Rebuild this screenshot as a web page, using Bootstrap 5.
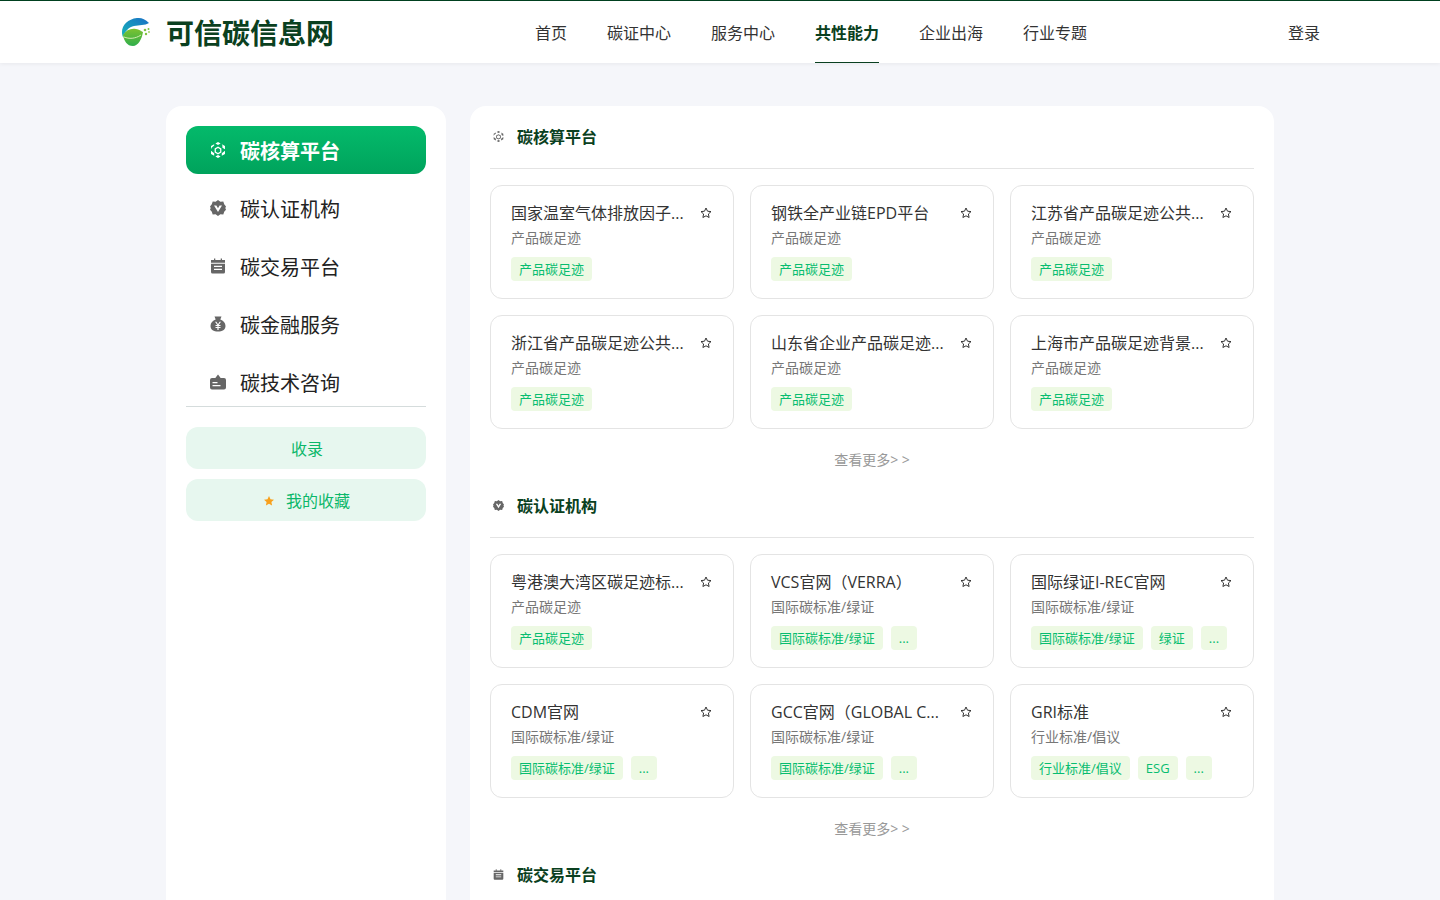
<!DOCTYPE html>
<html lang="zh-CN">
<head>
    <meta charset="UTF-8">
    <meta name="viewport" content="width=device-width, initial-scale=1">
    <title>可信碳信息网</title>
    <link href="https://cdn.jsdelivr.net/npm/bootstrap@5.3.0/dist/css/bootstrap.min.css" rel="stylesheet">
    <style>
        body {
            background-color: #f5f6fa;
            font-family: "Open Sans", "Noto Sans CJK SC", sans-serif;
            color: #222;
            overflow: hidden;
            height: 900px;
        }
        .top-bar {
            height: 63px;
            background: #fff;
            border-top: 1px solid #00401f;
            box-shadow: 0 1px 4px rgba(0, 0, 0, .06);
        }
        .brand-box { margin-left: 120px; width: 400px; }
        .brand-name { font-size: 28px; font-weight: 700; color: #0a4020; margin-left: 14px; line-height: 1; padding-top: 2px; }
        .main-nav { gap: 40px; height: 62px; margin-left: 15px; }
        .main-nav a { color: #333; font-size: 16px; text-decoration: none; line-height: 64px; height: 62px; display: block; }
        .main-nav a.on { color: #0a4020; font-weight: 700; border-bottom: 1px solid #0a4020; }
        .login-link { color: #333; font-size: 16px; text-decoration: none; margin-right: 120px; padding-top: 2px; }
        .page-wrap { width: 1108px; margin: 43px auto 0; gap: 24px; }
        .side-box { width: 280px; height: 900px; background: #fff; border-radius: 16px; padding: 20px; flex: none; }
        .side-item { height: 48px; margin-bottom: 10px; padding-left: 24px; border-radius: 12px; font-size: 20px; color: #222; text-decoration: none; gap: 14px; }
        .side-item span { padding-top: 4px; }
        .side-item svg { width: 16px; height: 16px; fill: #666; flex: none; }
        .side-item.on { background: linear-gradient(180deg, #04ba6b, #00a35c); color: #fff; font-weight: 700; }
        .side-item.on svg { fill: #fff; }
        .side-divider { border-top: 1px solid #d5dcdc; margin: -10px 0 20px; }
        .side-btn { height: 42px; background: #e7f7ef; border-radius: 12px; color: #0bb76a; font-size: 16px; text-decoration: none; margin-bottom: 10px; gap: 12px; padding: 2px 0 0 2px; }
        .main-box { width: 804px; height: 900px; background: #fff; border-radius: 16px; padding: 20px; flex: none; }
        .sec-head { height: 43px; margin-bottom: 16px; border-bottom: 1px solid #e4e4e4; gap: 13px; padding: 0 0 21px 3px; font-size: 16px; font-weight: 700; color: #0a4020; }
        .sec-head svg { width: 11px; height: 11px; fill: #666; flex: none; }
        .res-grid { display: grid; grid-template-columns: repeat(3, 244px); gap: 16px; }
        .res-card { height: 114px; border: 1px solid #e4e4e4; border-radius: 12px; padding: 15px 20px; }
        .res-title { font-size: 16px; line-height: 24px; color: #333; white-space: nowrap; }
        .res-star { width: 12px; height: 12px; fill: none; stroke: #333; stroke-width: 1; stroke-linejoin: round; flex: none; margin: 0 1px 0 0; }
        .res-sub { font-size: 14px; line-height: 20px; color: #777; margin-top: 3px; }
        .tag-row { gap: 8px; margin-top: 9px; }
        .res-tag { height: 24px; line-height: 24px; padding: 0 8px; background: #edf9e3; color: #08bd70; font-size: 13px; border-radius: 4px; white-space: nowrap; }
        .more-link { display: block; text-align: center; color: #999; font-size: 14px; line-height: 20px; margin: 21px 0 25px; text-decoration: none; }
    </style>
</head>
<body>
    <header class="top-bar d-flex align-items-center">
        <div class="brand-box d-flex align-items-center">
            <svg width="32" height="32" viewBox="0 0 32 32">
                <defs>
                    <linearGradient id="lg1" x1="0" y1="1" x2="1" y2="0"><stop offset="0" stop-color="#16b4b8"/><stop offset="1" stop-color="#1a6fc6"/></linearGradient>
                    <linearGradient id="lg2" x1="0" y1="0" x2="0" y2="1"><stop offset="0" stop-color="#7cc230"/><stop offset="1" stop-color="#2fae4c"/></linearGradient>
                </defs>
                <path d="M29 7C25 2.500 21 1.500 17 2 8 3 2 9 2 16c0 2.500.5 4 1 5 2-6 6-10 11-11 5-1 11-.5 15-3z" fill="url(#lg1)"/>
                <path d="M3 19c3-5 8-7 13-6 3 .5 5 2 7 3-1 7-5 14-10 14-6 0-9-5-10-11z" fill="url(#lg2)"/>
                <path d="M4 21c5 2 11 2 17-2" fill="none" stroke="#d4ecb0" stroke-width="1"/>
                <circle cx="25" cy="14" r="1.300" fill="#7fc241"/><circle cx="28.500" cy="13" r="1" fill="#7fc241"/><circle cx="26" cy="18" r="1.200" fill="#7fc241"/><circle cx="29" cy="16" r="1" fill="#a5d36a"/>
            </svg>
            <span class="brand-name">可信碳信息网</span>
        </div>
        <nav class="main-nav d-flex">
            <a href="#">首页</a>
            <a href="#">碳证中心</a>
            <a href="#">服务中心</a>
            <a href="#" class="on">共性能力</a>
            <a href="#">企业出海</a>
            <a href="#">行业专题</a>
        </nav>
        <a href="#" class="login-link ms-auto">登录</a>
    </header>

    <div class="page-wrap d-flex align-items-start">
        <aside class="side-box" id="sideBox"></aside>
        <main class="main-box" id="mainBox"></main>
    </div>

    <script src="https://cdn.jsdelivr.net/npm/bootstrap@5.3.0/dist/js/bootstrap.bundle.min.js"></script>
    <script>
        const star = '<svg class="res-star" viewBox="0 0 12 12"><path d="M6 1l1.500 3.200 3.500.4-2.600 2.400.7 3.500L6 8.800 2.900 10.500l.7-3.500L1 4.600l3.500-.4z"/></svg>';
        const icons = [
            // cube
            '<path fill-rule="evenodd" d="M8 0l2.600 1.500L8 3 5.400 1.500zM11.800 2.200L15 4v3.200l-2.600-1.500V3.500zM4.200 2.200v1.300L1.600 5.700 1 7.200V4zM8 4.600l3.400 2v3.800L8 12.400l-3.400-2V6.600zm0 1.500L5.900 7.300v2.400L8 11l2.100-1.300V7.300zM15 8.800V12l-3.200 1.800v-2.500zM1 8.800l3.200 2.500v2.500L1 12zM5.400 14.500L8 13l2.600 1.500L8 16z"/>',
            // badge with V
            '<path fill-rule="evenodd" d="M8 0l2.400 1.700 2.900-.1.900 2.700L16 6.500 15.300 8l.7 1.700-1.800 2.100-.9 2.600-2.900-.1L8 16l-2.400-1.700-2.900.1-.9-2.600L0 9.700.7 8 0 6.500l1.800-2.200.9-2.700 2.900.1zM4 5.500L8 12l4-6.500H9.600L8 8.300 6.400 5.500z"/>',
            // calendar
            '<path fill-rule="evenodd" d="M1 2h3V.500h1.300V2h5.400V.500H12V2h3v2.800H1zM1 5.800h14V14a1.500 1.500 0 0 1-1.500 1.500h-11A1.500 1.500 0 0 1 1 14zM4 7.800v1.300h8V7.800zm0 3v1.300h8v-1.300z"/>',
            // money bag
            '<path fill-rule="evenodd" d="M4.500.500h7L10.300 3.600C13.300 4.600 15.500 7 15.500 10c0 3.800-3.300 5.500-7.500 5.500S.5 13.800.5 10c0-3 2.200-5.400 5.200-6.400zM5 5.700L7.300 9H5.500v1.100h1.900v.9H5.500v1.100h1.900V14h1.200v-1.900h1.900V11H8.600v-.9h1.900V9H8.700L11 5.700H9.600L8 8.200 6.400 5.700z"/>',
            // case with peak
            '<path fill-rule="evenodd" d="M8 .500L10.700 4H14a2 2 0 0 1 2 2v7.500a2 2 0 0 1-2 2H2a2 2 0 0 1-2-2V6a2 2 0 0 1 2-2h3.300zM2.500 8v1.300h5V8zm0 3v1.300h8V11z"/>'
        ];
        const sideNames = ['碳核算平台', '碳认证机构', '碳交易平台', '碳金融服务', '碳技术咨询'];
        document.getElementById('sideBox').innerHTML = sideNames.map((n, i) =>
            `<a href="#" class="side-item ${i === 0 ? 'on ' : ''}d-flex align-items-center"><svg viewBox="0 0 16 16">${icons[i]}</svg><span>${n}</span></a>`).join('') + `
            <div class="side-divider"></div>
            <a href="#" class="side-btn d-flex align-items-center justify-content-center">收录</a>
            <a href="#" class="side-btn d-flex align-items-center justify-content-center"><svg width="10" height="10" viewBox="0 0 12 12"><path d="M6 0l1.800 3.900 4.200.5-3.100 2.900.8 4.200L6 9.400 2.300 11.500l.8-4.200L0 4.400l4.200-.5z" fill="#f8a01c"/></svg>我的收藏</a>`;

        const P = '产品碳足迹', G = '国际碳标准/绿证';
        const sections = [
            { name: '碳核算平台', items: [
                ['国家温室气体排放因子...', P, [P]],
                ['钢铁全产业链EPD平台', P, [P]],
                ['江苏省产品碳足迹公共...', P, [P]],
                ['浙江省产品碳足迹公共...', P, [P]],
                ['山东省企业产品碳足迹...', P, [P]],
                ['上海市产品碳足迹背景...', P, [P]]
            ]},
            { name: '碳认证机构', items: [
                ['粤港澳大湾区碳足迹标...', P, [P]],
                ['VCS官网（VERRA）', G, [G, '...']],
                ['国际绿证I-REC官网', G, [G, '绿证', '...']],
                ['CDM官网', G, [G, '...']],
                ['GCC官网（GLOBAL C...', G, [G, '...']],
                ['GRI标准', '行业标准/倡议', ['行业标准/倡议', 'ESG', '...']]
            ]},
            { name: '碳交易平台', items: [] }
        ];
        const headIcons = [icons[0], icons[1], icons[2]];
        document.getElementById('mainBox').innerHTML = sections.map((s, i) => `
            <div class="sec-head d-flex align-items-center"><svg viewBox="0 0 16 16">${headIcons[i]}</svg>${s.name}</div>
            <div class="res-grid">${s.items.map(it => `
                <div class="res-card">
                    <div class="d-flex justify-content-between align-items-center"><div class="res-title">${it[0]}</div>${star}</div>
                    <div class="res-sub">${it[1]}</div>
                    <div class="tag-row d-flex">${it[2].map(t => `<span class="res-tag">${t}</span>`).join('')}</div>
                </div>`).join('')}</div>
            ${s.items.length ? '<a href="#" class="more-link">查看更多&gt; &gt;</a>' : ''}`).join('');
    </script>
</body>
</html>
